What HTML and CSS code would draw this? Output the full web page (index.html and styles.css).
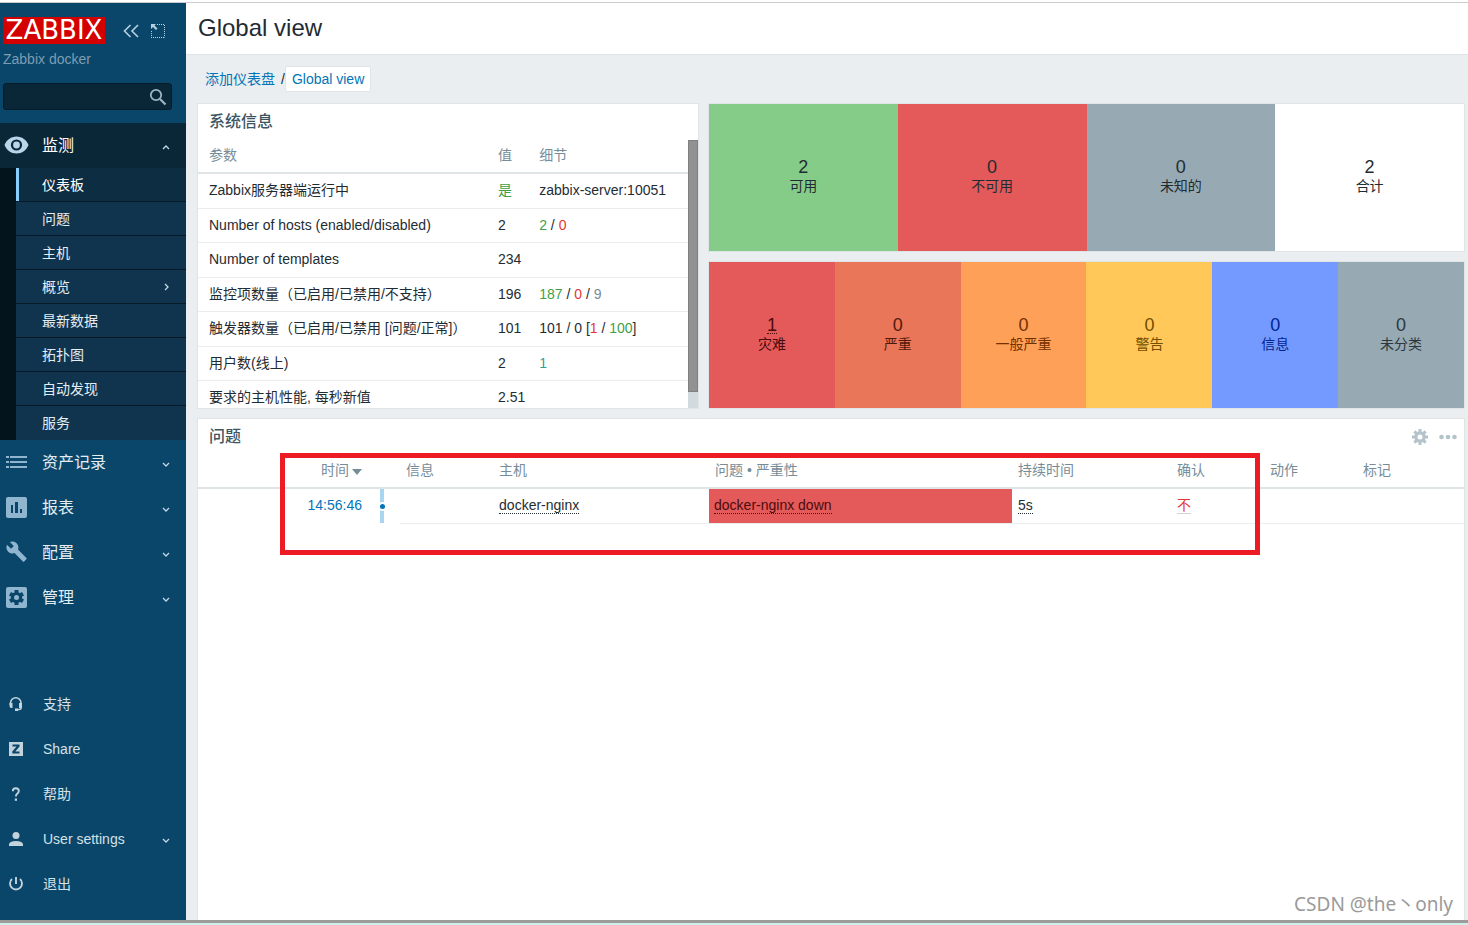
FILE: index.html
```html
<!DOCTYPE html>
<html lang="zh-CN">
<head>
<meta charset="utf-8">
<title>Global view</title>
<link rel="stylesheet" href="styles.css">
</head>
<body>
<div class="frame">
  <aside class="sidebar">
    <div class="brand">
      <a class="logo" href="#">ZABBIX</a>
      <button class="icon-btn" aria-label="Collapse sidebar"><svg width="18" height="16" viewBox="0 0 18 16"><path d="M8.500 2 2.500 8l6 6M16 2l-6 6 6 6" fill="none" stroke="#b9d0e0" stroke-width="1.600"/></svg></button>
      <button class="icon-btn" aria-label="Hide sidebar"><svg width="16" height="16" viewBox="0 0 16 16"><path d="M7 1.500h8M14.500 2v12.500M1.500 8v6.500M1 14.500h14" fill="none" stroke="#b9d0e0" stroke-dasharray="1 1"/><path d="M1 1h5L4.500 2.500 7.500 5.500 6 7 3 4 1 6z" fill="#b9d0e0"/></svg></button>
    </div>
    <div class="server">Zabbix docker</div>
    <form class="search">
      <input type="text" aria-label="Search">
      <button type="button" class="icon-btn" aria-label="Search"><svg width="18" height="18" viewBox="0 0 18 18"><circle cx="7" cy="7" r="5.200" fill="none" stroke="#9db4c2" stroke-width="1.800"/><path d="m11 11 5.500 5.500" stroke="#9db4c2" stroke-width="2.200"/></svg></button>
    </form>
    <nav class="menu">
      <a class="item open" href="#"><svg class="ico" width="26" height="26" viewBox="0 0 26 26"><path d="M1.500 12C3.500 7 8 3.500 13.500 3.500S23.500 7 25.500 12c-2 5-6.500 8.500-12 8.500S3.500 17 1.500 12z" fill="#b7d6ea"/><circle cx="13.500" cy="12" r="5.600" fill="#0a2738"/><circle cx="13.500" cy="12" r="3.400" fill="#b7d6ea"/></svg><span>监测</span><svg class="chev" width="8" height="8" viewBox="0 0 8 8"><path d="m1 6 3-3 3 3"/></svg></a>
      <div class="submenu">
        <a class="sub current" href="#"><span>仪表板</span></a>
        <a class="sub" href="#"><span>问题</span></a>
        <a class="sub" href="#"><span>主机</span></a>
        <a class="sub" href="#"><span>概览</span><svg class="chev" width="8" height="8" viewBox="0 0 8 8"><path d="m3 1 3 3-3 3"/></svg></a>
        <a class="sub" href="#"><span>最新数据</span></a>
        <a class="sub" href="#"><span>拓扑图</span></a>
        <a class="sub" href="#"><span>自动发现</span></a>
        <a class="sub" href="#"><span>服务</span></a>
      </div>
      <a class="item" href="#"><svg class="ico" width="26" height="26" viewBox="0 0 26 26"><path d="M3 6h3v2H3zM7 6h17v2H7zM3 11h3v2H3zM7 11h17v2H7zM3 16h3v2H3zM7 16h17v2H7z" fill="#8fb5cf"/></svg><span>资产记录</span><svg class="chev" width="8" height="8" viewBox="0 0 8 8"><path d="m1 3 3 3 3-3"/></svg></a>
      <a class="item" href="#"><svg class="ico" width="26" height="26" viewBox="0 0 26 26"><rect x="3" y="2" width="21" height="21" rx="2" fill="#8fb5cf"/><path d="M8 10h2v8H8zM12 7h3v11h-3zM17 14h2v4h-2z" fill="#0a466a"/></svg><span>报表</span><svg class="chev" width="8" height="8" viewBox="0 0 8 8"><path d="m1 3 3 3 3-3"/></svg></a>
      <a class="item" href="#"><svg class="ico" width="26" height="26" viewBox="0 0 26 26"><path transform="translate(2.500 .5) scale(.92)" d="M22.700 19l-9.100-9.100c.9-2.300.4-5-1.500-6.900-2-2-5-2.400-7.400-1.300L9 6 6 9 1.600 4.700C.4 7.100.9 10.100 2.900 12.100c1.900 1.900 4.600 2.400 6.900 1.500l9.100 9.100c.4.400 1 .4 1.400 0l2.300-2.300c.5-.4.500-1.100.1-1.400z" fill="#8fb5cf"/></svg><span>配置</span><svg class="chev" width="8" height="8" viewBox="0 0 8 8"><path d="m1 3 3 3 3-3"/></svg></a>
      <a class="item" href="#"><svg class="ico" width="26" height="26" viewBox="0 0 26 26"><rect x="3" y="2" width="21" height="21" rx="2" fill="#8fb5cf"/><g fill="#0a466a"><circle cx="13.500" cy="12.500" r="5.600"/><path d="M11.500 5h4v15h-4z"/><path d="M11.500 5h4v15h-4z" transform="rotate(60 13.500 12.500)"/><path d="M11.500 5h4v15h-4z" transform="rotate(120 13.500 12.500)"/></g><circle cx="13.500" cy="12.500" r="2.500" fill="#8fb5cf"/></svg><span>管理</span><svg class="chev" width="8" height="8" viewBox="0 0 8 8"><path d="m1 3 3 3 3-3"/></svg></a>
    </nav>
    <nav class="menu user">
      <a class="item" href="#"><svg class="ico" width="26" height="26" viewBox="0 0 26 26"><path d="M7.500 14v-2a5 5 0 0 1 10.500 0v5.500q0 1-3.500 1" fill="none" stroke="#c3d3dd" stroke-width="1.600"/><path d="M6.500 12h3v5h-1q-2 0-2-2zM16 12h3v5h-3zM12 17.500h3v2.500h-3z" fill="#c3d3dd"/></svg><span>支持</span></a>
      <a class="item" href="#"><svg class="ico" width="26" height="26" viewBox="0 0 26 26"><rect x="6" y="6" width="14" height="14" fill="#c3d3dd"/><path d="M9.500 8.500h7v2l-4.200 5h4.200v2H9.300v-2l4.200-5h-4z" fill="#0a466a"/></svg><span>Share</span></a>
      <a class="item" href="#"><svg class="ico" width="26" height="26" viewBox="0 0 26 26"><path d="M9.800 10.200q0-3 3-3t3 2.800q0 1.500-1.600 2.700-1.300 1-1.300 2.800" fill="none" stroke="#c3d3dd" stroke-width="1.900"/><path d="M11.800 17.500h2.200v2.300h-2.200z" fill="#c3d3dd"/></svg><span>帮助</span></a>
      <a class="item" href="#"><svg class="ico" width="26" height="26" viewBox="0 0 26 26"><circle cx="13" cy="9.500" r="3.500" fill="#c3d3dd"/><path d="M6 20v-2q1-3 7-3t7 3v2z" fill="#c3d3dd"/></svg><span>User settings</span><svg class="chev" width="8" height="8" viewBox="0 0 8 8"><path d="m1 3 3 3 3-3"/></svg></a>
      <a class="item" href="#"><svg class="ico" width="26" height="26" viewBox="0 0 26 26"><path d="M9 8a6 6 0 1 0 8 0M13 6v7" fill="none" stroke="#c3d3dd" stroke-width="1.900"/></svg><span>退出</span></a>
    </nav>
  </aside>
  <main class="main">
    <header class="title"><h1>Global view</h1></header>
    <div class="crumbs"><a href="#">添加仪表盘</a><span class="slash">/</span><a class="here" href="#">Global view</a></div>
    <div class="dashboard">
      <section class="widget sysinfo">
        <h4>系统信息</h4>
        <div class="scroller">
          <table class="list">
            <colgroup><col class="c-param"><col class="c-value"><col class="c-detail"></colgroup>
            <thead><tr><th>参数</th><th>值</th><th>细节</th></tr></thead>
            <tbody>
              <tr><td>Zabbix服务器端运行中</td><td class="green">是</td><td>zabbix-server:10051</td></tr>
              <tr><td>Number of hosts (enabled/disabled)</td><td>2</td><td><span class="green">2</span> / <span class="red">0</span></td></tr>
              <tr><td>Number of templates</td><td>234</td><td></td></tr>
              <tr><td>监控项数量（已启用/已禁用/不支持）</td><td>196</td><td><span class="green">187</span> / <span class="red">0</span> / <span class="grey">9</span></td></tr>
              <tr><td>触发器数量（已启用/已禁用 [问题/正常]）</td><td>101</td><td>101 / 0 [<span class="red">1</span> / <span class="green">100</span>]</td></tr>
              <tr><td>用户数(线上)</td><td>2</td><td class="teal">1</td></tr>
              <tr><td>要求的主机性能, 每秒新值</td><td>2.51</td><td></td></tr>
            </tbody>
          </table>
          <div class="track"><div class="thumb"></div></div>
        </div>
      </section>
      <div class="tiles">
        <section class="widget tile-row">
          <div class="tile ok"><b>2</b><span>可用</span></div>
          <div class="tile bad"><b>0</b><span>不可用</span></div>
          <div class="tile unknown"><b>0</b><span>未知的</span></div>
          <div class="tile"><b>2</b><span>合计</span></div>
        </section>
        <section class="widget tile-row">
          <div class="tile disaster"><b><a class="dotted" href="#">1</a></b><span>灾难</span></div>
          <div class="tile high"><b>0</b><span>严重</span></div>
          <div class="tile average"><b>0</b><span>一般严重</span></div>
          <div class="tile warning"><b>0</b><span>警告</span></div>
          <div class="tile info"><b>0</b><span>信息</span></div>
          <div class="tile none"><b>0</b><span>未分类</span></div>
        </section>
      </div>
      <section class="widget problems">
        <div class="widget-head"><h4>问题</h4>
          <button class="icon-btn" aria-label="Edit"><svg width="16" height="16" viewBox="0 0 16 16"><g fill="#b5c3ca"><path d="M6.500 0h3v16h-3z"/><path d="M6.500 0h3v16h-3z" transform="rotate(45 8 8)"/><path d="M6.500 0h3v16h-3z" transform="rotate(90 8 8)"/><path d="M6.500 0h3v16h-3z" transform="rotate(135 8 8)"/><circle cx="8" cy="8" r="5.800"/></g><circle cx="8" cy="8" r="2.500" fill="#fff"/></svg></button>
          <button class="icon-btn" aria-label="More"><svg width="20" height="16" viewBox="0 0 20 16"><g fill="#b5c3ca"><circle cx="3.500" cy="8" r="2.300"/><circle cx="10" cy="8" r="2.300"/><circle cx="16.500" cy="8" r="2.300"/></g></svg></button>
        </div>
        <table class="list events">
          <colgroup><col class="e-time"><col class="e-axis"><col class="e-info"><col class="e-host"><col class="e-problem"><col class="e-dur"><col class="e-ack"><col class="e-act"><col class="e-tag"></colgroup>
          <thead><tr><th class="time">时间<span class="sort"></span></th><th></th><th>信息</th><th>主机</th><th>问题 • 严重性</th><th>持续时间</th><th>确认</th><th>动作</th><th>标记</th></tr></thead>
          <tbody><tr><td class="time"><a href="#">14:56:46</a></td><td class="axis"><span class="line"><i></i></span></td><td></td><td><a class="dotted" href="#">docker-nginx</a></td><td class="severity"><a class="dotted" href="#">docker-nginx down</a></td><td><a class="dotted" href="#">5s</a></td><td><a class="ack" href="#">不</a></td><td></td><td></td></tr></tbody>
        </table>
        <div class="highlight"></div>
        <div class="watermark">CSDN @the丶only</div>
      </section>
    </div>
  </main>
</div>
</body>
</html>
```
FILE: styles.css
```css
* { box-sizing: border-box; }
body {
  margin: 0;
  background: #fff;
  color: #1f2c33;
  font: 14px/20px "Liberation Sans", "Noto Sans CJK SC", sans-serif;
}
a { color: inherit; text-decoration: none; }
h1, h4 { margin: 0; }
svg { display: block; flex: none; }
.icon-btn { display: block; padding: 0; border: 0; background: none; cursor: pointer; }

.frame {
  display: flex;
  height: 100vh;
  padding-top: 2px;
  border-bottom: 2px solid #cfeeea;
}
.sidebar, .main { border-top: 1px solid #ccc; border-bottom: 3px solid #9c9c9c; }

/* Sidebar */
.sidebar {
  display: flex;
  flex: none;
  flex-direction: column;
  width: 186px;
  padding-bottom: 14px;
  background: #0a466a;
  color: #e3edf3;
}
.brand { display: flex; align-items: center; padding: 14px 0 0 3px; }
.logo {
  width: 102px;
  margin-right: 17px;
  background: #d40000;
  color: #fff;
  font: 26px/27px "DejaVu Sans", sans-serif;
  text-align: center;
}
.brand .icon-btn + .icon-btn { margin-left: 10px; }
.server { padding: 5px 3px 0; color: #7c9db2; }
.search {
  display: flex;
  align-items: center;
  height: 27px;
  margin: 14px 14px 13px 3px;
  padding-right: 4px;
  border: 1px solid #051d2b;
  border-radius: 3px;
  background: #0a2738;
}
.search input { flex: 1; min-width: 0; border: 0; background: none; color: #fff; outline: 0; }
.item { display: flex; align-items: center; height: 45px; padding: 0 16px 0 3px; font-size: 16px; }
.item .ico { margin-right: 13px; }
.chev { margin-left: auto; fill: none; stroke: #c3d8e5; stroke-width: 1.3px; }
.item .chev { margin-top: 2px; }
.item.open { background: #0a2738; color: #fff; }
.submenu { border-left: 16px solid #03141d; }
.sub {
  display: flex;
  align-items: center;
  height: 34px;
  padding: 0 16px 0 26px;
  border-bottom: 1px solid #051a26;
  background: #10344d;
}
.sub:last-child { border-bottom-color: #10344d; }
.sub.current {
  background: #0d2d42;
  box-shadow: inset 3px 0 #87cefa;
  color: #fff;
}
.user { margin-top: auto; }
.user .item { font-size: 14px; color: #d5e1e8; }
.user .ico { margin-right: 14px; }

/* Page */
.main { display: flex; flex: 1; flex-direction: column; min-width: 0; background: #ebeef0; }
.title { padding: 9px 12px 11px; border-bottom: 1px solid #dfe4e7; background: #fff; }
.title h1 { font-size: 24px; font-weight: 400; line-height: 31px; }
.crumbs { display: flex; align-items: center; padding: 11px 19px; color: #1f2c33; }
.crumbs a { color: #0275b8; }
.slash { margin-left: 6px; }
.crumbs .here { padding: 2px 6px; border: 1px solid #dfe4e7; border-radius: 2px; background: #fff; }
.crumbs .here { line-height: 20px; }
.dashboard {
  display: grid;
  flex: 1;
  grid-template: 306px minmax(0, 1fr) / 502fr 757fr;
  gap: 9px;
  min-height: 0;
  padding: 0 3px 0 11px;
}
.widget { min-width: 0; border: 1px solid #dfe4e7; background: #fff; }
.widget h4 { padding: 8px 11px; color: #3c5563; font-size: 16px; font-weight: 500; }
.sysinfo { display: flex; flex-direction: column; overflow: hidden; }
.scroller { display: flex; flex: 1; align-items: flex-start; min-height: 0; overflow: hidden; }
.track { flex: none; align-self: stretch; width: 10px; background: #d2dae0; }
.thumb { height: 94%; border: 1px solid #808080; background: #929292; }

.list { width: 100%; table-layout: fixed; border-collapse: separate; border-spacing: 0; }
.list th {
  height: 34px;
  padding: 0 6px 2px;
  border-bottom: 2px solid #dfe4e7;
  color: #768d99;
  font-weight: 400;
  text-align: left;
  white-space: nowrap;
}
.list td { height: 35px; padding: 0 6px 2px; border-bottom: 1px solid #ebeef0; white-space: nowrap; }
.list tbody tr:nth-child(even) td { height: 34px; }
.list th:first-child, .list td:first-child { padding-left: 11px; }
.c-param { width: 60%; }
.c-value { width: 8%; }
.sysinfo .list th:last-child, .sysinfo .list td:last-child { padding-left: 8px; }
.green { color: #429e47; }
.red { color: #e33734; }
.grey { color: #768d99; }
.teal { color: #2f9f95; }

/* Counters */
.tiles { display: grid; grid-template-rows: 149px 148px; gap: 9px; min-width: 0; }
.tile-row { display: flex; }
.tile {
  display: flex;
  flex: 1;
  flex-direction: column;
  justify-content: center;
  padding-bottom: 2px;
  line-height: 19px;
  text-align: center;
}
.tile-row:last-child .tile { padding-bottom: 0; }
.tile b { font-size: 18px; font-weight: 400; }
.ok { background: #86cc89; }
.bad, .disaster, .severity { background: #e45959; }
.unknown, .none { background: #97aab3; }
.disaster, .severity { color: #4b0c0c; }
.high { background: #e97659; color: #52190b; }
.average { background: #ffa059; color: #733100; }
.warning { background: #ffc859; color: #734d00; }
.info { background: #7499ff; color: #00268e; }
.none { color: #2a383f; }
.dotted { border-bottom: 1px dotted currentColor; }
.dotted, .ack { display: inline-block; line-height: 16px; }

/* Problems */
.problems { position: relative; grid-column: 1 / -1; border-bottom: 0; }
.widget-head { display: flex; align-items: center; padding-right: 6px; }
.widget-head h4 { flex: 1; }
.widget-head .icon-btn + .icon-btn { margin-left: 10px; }
.list.events .time { text-align: right; }
.events .time a { color: #0275b8; }
.events td:nth-child(-n+2) { border-bottom-color: transparent; }
.events .severity { padding-left: 5px; }
.sort {
  display: inline-block;
  margin-left: 3px;
  border: 5px solid transparent;
  border-top: 6px solid #768d99;
  border-bottom: 0;
}
.e-time { width: 13.43%; }
.e-axis { width: 2.53%; }
.e-info, .e-ack, .e-act { width: 7.35%; }
.e-host { width: 17.06%; }
.e-problem { width: 23.93%; }
.e-dur { width: 12.56%; }
.list .axis { padding: 0 12px; }
.line {
  display: flex;
  align-items: center;
  justify-content: center;
  width: 4px;
  height: 34px;
  background: #a8d5ef;
}
.line i {
  flex: none;
  width: 9px;
  height: 9px;
  border: 2px solid #fff;
  border-radius: 5px;
  background: #0275b8;
}
.ack { border-bottom: 1px solid #ccd5d9; color: #e33734; }
.highlight {
  position: absolute;
  top: 34px;
  right: 204px;
  left: 82px;
  height: 102px;
  border: 5px solid #ed1c24;
}
.watermark {
  position: absolute;
  right: 11px;
  bottom: 2px;
  color: #9a9a9a;
  font: 19px/28px "Noto Sans", "Noto Sans CJK SC", sans-serif;
}
```
